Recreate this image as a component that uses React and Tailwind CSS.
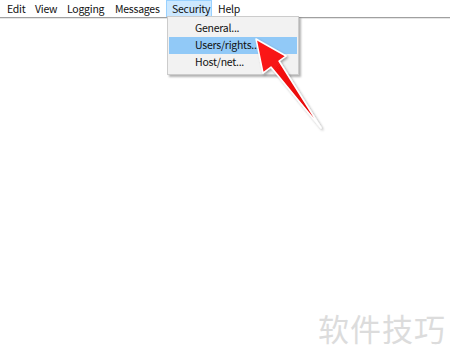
export default function App() {
  const menus = [
    { label: 'Edit', w: 'w-[28px]' },
    { label: 'View', w: 'w-[32px]' },
    { label: 'Logging', w: 'w-[48px]' },
    { label: 'Messages', w: 'w-[57px]' },
    { label: 'Security', w: 'w-[46px]', active: true },
    { label: 'Help', w: 'w-[32px]' },
  ]

  return (
    <div
      className="relative w-[450px] h-[361px] bg-white overflow-hidden text-[10.5px] tracking-[-0.25px] text-[#111]"
      style={{ fontFamily: '"Noto Sans CJK SC", sans-serif' }}
    >
      {/* menu bar */}
      <div className="flex h-[18px] pl-[1px] border-b border-[#a0a0a0] shadow-[0_1px_0_#e6e6e6]">
        {menus.map((m) => (
          <div
            key={m.label}
            className={`${m.w} pl-[5px] h-[17px] leading-[16px] border whitespace-nowrap ${
              m.active ? 'bg-[#cce8ff] border-[#99d1ff]' : 'border-transparent'
            }`}
          >
            {m.label}
          </div>
        ))}
      </div>

      {/* dropdown */}
      <div className="absolute left-[167px] top-[16px] w-[132px] bg-[#f2f2f2] border border-[#cccccc] shadow-[2px_2px_2px_rgba(0,0,0,0.3)] py-[3px] px-[1px]">
        <div className="h-[17px] leading-[16px] pl-[26px]">General...</div>
        <div className="h-[17px] leading-[16px] pl-[26px] bg-[#91c9f7]">Users/rights...</div>
        <div className="h-[17px] leading-[16px] pl-[26px]">Host/net...</div>
      </div>

      {/* annotation arrow */}
      <svg className="absolute left-0 top-0" width="450" height="361" viewBox="0 0 450 361">
        <defs>
          <linearGradient id="ar" x1="0" y1="0" x2="1" y2="1">
            <stop offset="0" stopColor="#ff1a1a" />
            <stop offset="1" stopColor="#e00000" />
          </linearGradient>
          <filter id="sh" x="-20%" y="-20%" width="140%" height="140%">
            <feDropShadow dx="1.5" dy="1.5" stdDeviation="1.2" floodColor="#000" floodOpacity="0.35" />
          </filter>
        </defs>
        <polygon
          points="256,39 286,56 279,61 321,128 271,67 263,73"
          fill="url(#ar)"
          stroke="#ffffff"
          strokeWidth="1.5"
          strokeLinejoin="round"
          filter="url(#sh)"
        />
      </svg>

      {/* watermark */}
      <div className="absolute left-[318px] top-[305px] text-[31px] text-[#dcdcdc] tracking-[1px]">
        软件技巧
      </div>
    </div>
  )
}
